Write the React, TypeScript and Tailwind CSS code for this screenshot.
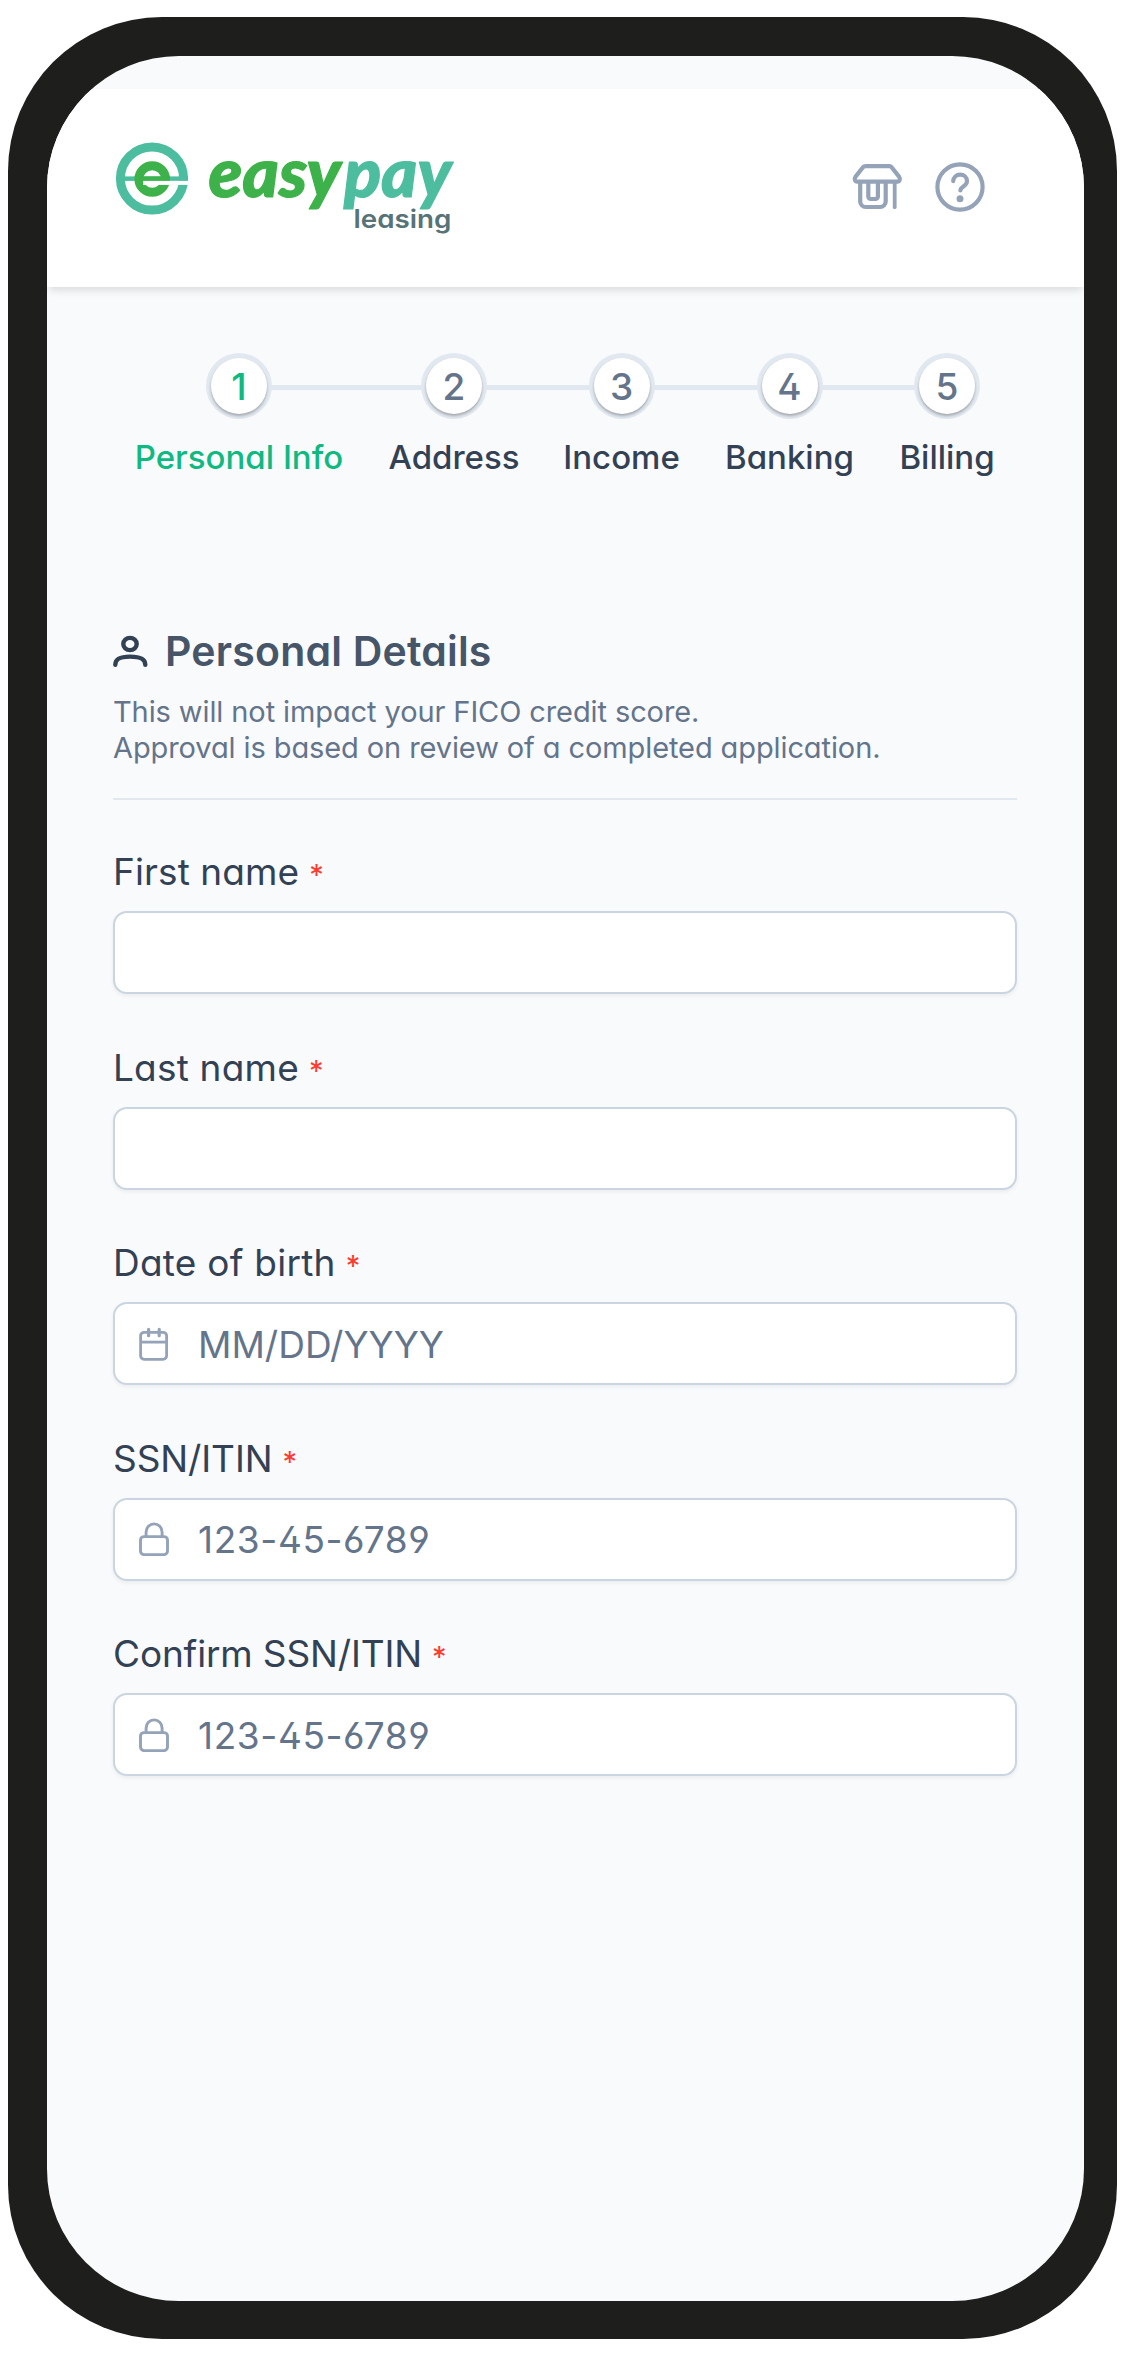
import type { ReactNode } from "react";

function EasypayLogo() {
  return (
    <svg width="350" height="120" viewBox="110 120 350 120" className="block" role="img" aria-label="easypay leasing">
      <circle cx="152" cy="178.5" r="31.6" fill="none" stroke="#4dbd9f" strokeWidth="9" />
      <rect x="118" y="176.4" width="69.8" height="4.5" fill="#4dbd9f" />
      <circle cx="152.2" cy="179" r="13.3" fill="none" stroke="#3db24a" strokeWidth="9" />
      <rect x="140" y="176.4" width="30" height="4.5" fill="#3db24a" />
      <rect x="143.2" y="180.9" width="46.8" height="4" fill="#ffffff" />
      <g fontFamily="Lato, sans-serif" fontWeight="900" fontStyle="italic" fontSize="69" strokeWidth="1.2" strokeLinejoin="round">
        <text x="208.5" y="196.5" fill="#3db24a" stroke="#3db24a" textLength="132.5" lengthAdjust="spacingAndGlyphs">easy</text>
        <text x="344" y="196.5" fill="#4dbd9f" stroke="#4dbd9f" textLength="107.5" lengthAdjust="spacingAndGlyphs">pay</text>
      </g>
      <text x="353.5" y="227.5" fill="#587378" fontFamily="Inter, sans-serif" fontWeight="600" fontSize="25.5" textLength="98" lengthAdjust="spacingAndGlyphs">
        leasing
      </text>
    </svg>
  );
}

function StoreIcon() {
  return (
    <svg width="52" height="48" viewBox="851 162 52 48" fill="none" stroke="#94a3b8" strokeWidth="4.2" strokeLinecap="round" strokeLinejoin="round" className="block">
      <path d="M866 166.2h23.4c.9 0 1.6.3 2.2 1l7.6 9.7c1.4 1.9.5 4.7-1.8 4.7H857.2c-2.3 0-3.2-2.8-1.8-4.7l7.6-9.700c.6-.7 1.8-1 3-1z" />
      <path d="M860.2 182v19.5a5.5 5.5 0 0 0 5.5 5.500h14.500a5.500 5.500 0 0 0 5.500-5.500V182" />
      <path d="M868.3 182v14.5a2.500 2.500 0 0 0 2.500 2.500h4.600a2.500 2.500 0 0 0 2.500-2.500V182" />
      <path d="M894.7 182v25.2" strokeWidth="3.8" />
    </svg>
  );
}

function HelpIcon() {
  return (
    <svg width="50" height="50" viewBox="0 0 50 50" fill="none" stroke="#94a3b8" strokeWidth="4.2" strokeLinecap="round" className="block">
      <circle cx="25" cy="25" r="22.6" />
      <path d="M18.2 19.2a6.9 6.9 0 0 1 6.9-6.5c4 0 6.9 2.8 6.9 6.5 0 5-6.6 5.4-6.6 9.3" />
      <circle cx="25" cy="36.8" r="3.5" fill="#94a3b8" stroke="none" />
    </svg>
  );
}

function UserIcon() {
  return (
    <svg width="35" height="33" viewBox="0 0 35 33" fill="none" stroke="#334155" strokeWidth="4.4" strokeLinecap="round" className="block">
      <ellipse cx="17" cy="9" rx="6.7" ry="6.1" />
      <path d="M2.3 29.8c0-5.600 3.600-8.200 14.700-8.200s15.300 2.600 15.300 8.200" />
    </svg>
  );
}

function CalendarIcon() {
  return (
    <svg width="30" height="34" viewBox="0 0 30 34" fill="none" stroke="#94a3b8" strokeWidth="2.8" className="block">
      <rect x="1.6" y="5.3" width="26" height="27" rx="3.5" />
      <path d="M2 15.1h26" />
      <path d="M9.6 2.3v6.4M20.2 2.3v6.4" strokeWidth="3.2" strokeLinecap="round" />
    </svg>
  );
}

function LockIcon() {
  return (
    <svg width="30" height="34" viewBox="0 0 30 34" fill="none" stroke="#94a3b8" strokeWidth="2.9" className="block">
      <rect x="1.5" y="14.6" width="27" height="18" rx="3.5" />
      <path d="M7.1 14.4V9.900a8 8 0 0 1 16 0v4.500" />
    </svg>
  );
}

const steps = [
  { label: "Personal Info", width: "w-[210px]", active: true },
  { label: "Address", width: "w-[130px]" },
  { label: "Income", width: "w-[115px]" },
  { label: "Banking", width: "w-[131px]" },
  { label: "Billing", width: "w-[94px]" },
];

function Stepper() {
  return (
    <nav className="relative flex gap-[45px] pt-[66px] pl-[87px]">
      <div className="absolute top-[98px] left-[192px] h-[5px] w-[708px] bg-[#e2e8f0]" />
      {steps.map((step, i) => (
        <div key={step.label} className={`relative flex flex-col items-center ${step.width}`}>
          <div className="flex size-[66px] items-center justify-center rounded-full bg-[#e2e8f0]">
            <div
              className={`flex size-14 items-center justify-center rounded-full bg-white text-[37px] leading-none font-medium shadow-[0_2px_3px_rgba(0,0,0,0.28)] ${
                step.active ? "text-[#10b981]" : "text-[#64748b]"
              }`}
            >
              {i + 1}
            </div>
          </div>
          <div
            className={`mt-[17px] text-[33px] leading-[42px] font-medium whitespace-nowrap ${
              step.active ? "text-[#10b981]" : "text-[#334155]"
            }`}
          >
            {step.label}
          </div>
        </div>
      ))}
    </nav>
  );
}

interface FieldProps {
  label: string;
  tracking: string;
  placeholder?: string;
  placeholderTracking?: string;
  icon?: ReactNode;
}

function Field({ label, tracking, placeholder, placeholderTracking = "", icon }: FieldProps) {
  return (
    <div className="h-[195.6px]">
      <div className="flex h-[42px] items-center text-[37px] leading-[42px] whitespace-nowrap text-[#334155]">
        <span className={tracking}>{label}</span>
        <span className="ml-2.5 h-[42px] text-[29px] leading-[48px] text-[#ff3b30]">*</span>
      </div>
      <div className="mt-[18px] flex h-[83px] items-center rounded-[14px] border-2 border-[#cbd5e1] bg-white pl-[23.5px] shadow-[0_2px_4px_rgba(0,0,0,0.06)]">
        {icon}
        {placeholder && (
          <span className={`ml-[29.5px] pt-0.5 text-[37px] leading-[44px] text-[#64748b] ${placeholderTracking}`}>{placeholder}</span>
        )}
      </div>
    </div>
  );
}

export default function App() {
  return (
    <div className="h-[2356px] w-[1125px] bg-white pt-[17px] pl-2 font-['Inter',sans-serif] [font-feature-settings:'cv02','cv03','cv04','cv11']">
      <div className="h-[2322px] w-[1109px] overflow-hidden rounded-[154px] bg-[#1e1e1c] pt-[38.5px] pl-[39px]">
        <div className="h-[2245px] w-[1037px] overflow-hidden rounded-[132px] bg-[#f9fafc]">
          <header className="relative mt-[33px] flex h-[198.5px] justify-between bg-white shadow-[0_5px_8px_-2px_rgba(0,0,0,0.13)]">
            <div className="pt-[31.5px] pl-[63px]">
              <EasypayLogo />
            </div>
            <div className="flex gap-8 pt-[73.5px] pr-[99px]">
              <StoreIcon />
              <HelpIcon />
            </div>
          </header>
          <Stepper />
          <main className="mx-[66px] mt-[149px] w-[904px]">
            <div className="flex h-12 items-center">
              <UserIcon />
              <h1 className="ml-[17px] text-[41px] leading-[48px] font-semibold tracking-[0.2px] text-[#475569]">Personal Details</h1>
            </div>
            <p className="mt-[19px] border-b-2 border-[#e2e8f0] pb-8 text-[29px] leading-9 tracking-[-0.1px] whitespace-nowrap text-[#64748b]">
              This will not impact your FICO credit score.
              <br />
              Approval is based on review of a completed application.
            </p>
            <form className="mt-[51px]">
              <Field label="First name" tracking="tracking-[0.1px]" />
              <Field label="Last name" tracking="tracking-[0.2px]" />
              <Field label="Date of birth" tracking="tracking-[0.25px]" placeholder="MM/DD/YYYY" icon={<CalendarIcon />} />
              <Field
                label="SSN/ITIN"
                tracking="tracking-[-0.1px]"
                placeholder="123-45-6789"
                placeholderTracking="tracking-[0.6px]"
                icon={<LockIcon />}
              />
              <Field
                label="Confirm SSN/ITIN"
                tracking="tracking-[-0.15px]"
                placeholder="123-45-6789"
                placeholderTracking="tracking-[0.6px]"
                icon={<LockIcon />}
              />
            </form>
          </main>
        </div>
      </div>
    </div>
  );
}
